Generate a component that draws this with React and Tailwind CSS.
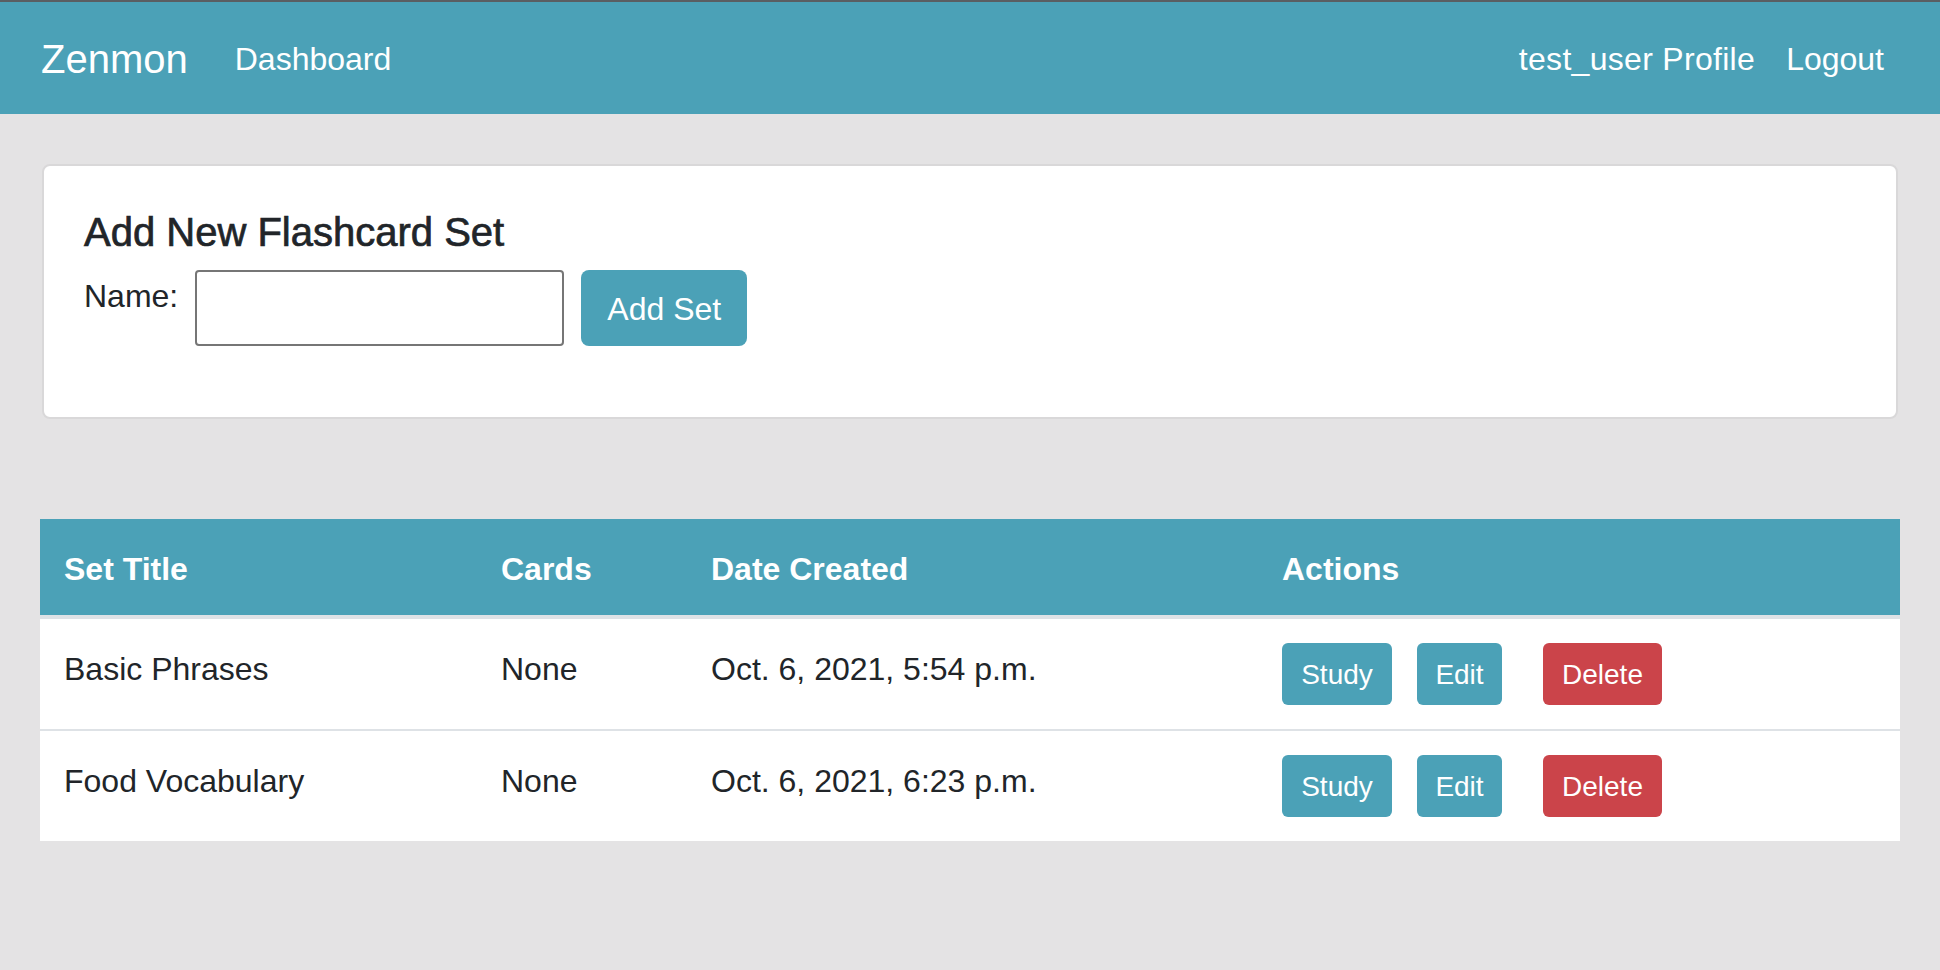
export default function App() {
  const rows = [
    { title: "Basic Phrases", cards: "None", date: "Oct. 6, 2021, 5:54 p.m." },
    { title: "Food Vocabulary", cards: "None", date: "Oct. 6, 2021, 6:23 p.m." },
  ];
  return (
    <div className="min-h-screen bg-[#e4e3e4] font-['Liberation_Sans',Arial,sans-serif] text-[#212529]">
      <div className="h-[2px] bg-[#5a5e62]" />
      <nav className="h-[112px] bg-[#4ba1b7] flex items-center pl-[41px] pr-[56px] text-white">
        <span className="text-[40px] leading-[60px] pt-[2px]">Zenmon</span>
        <a className="ml-[47px] text-[32px] leading-[48px] pt-[2px]">Dashboard</a>
        <div className="ml-auto flex gap-[31px] text-[32px] leading-[48px] pt-[2px]">
          <a className="tracking-[0.3px]">test_user Profile</a>
          <a>Logout</a>
        </div>
      </nav>
      <main className="px-[40px] pt-[50px] pb-[40px]">
        <div className="mx-[2px] border-2 border-[#d9d8d9] rounded-[8px] bg-white px-[40px] pt-[40px] pb-[71px]">
          <h5 className="text-[40px] leading-[48px] font-medium mb-[14px] pt-[2px] [-webkit-text-stroke:0.7px_#212529]">
            Add New Flashcard Set
          </h5>
          <form className="flex items-start" onSubmit={(e) => e.preventDefault()}>
            <label className="text-[32px] leading-[48px] pt-[2px]">Name:</label>
            <input
              type="text"
              className="ml-[17px] w-[369px] h-[76px] border-2 border-[#767676] rounded-[4px] bg-white outline-none px-2 text-[32px]"
            />
            <button
              type="submit"
              className="ml-[17px] h-[76px] w-[166px] bg-[#4ba1b7] text-white text-[32px] rounded-[8px] flex items-center justify-center pt-[2px]"
            >
              Add Set
            </button>
          </form>
        </div>

        <table className="mt-[100px] w-full table-fixed border-collapse">
          <colgroup>
            <col className="w-[437px]" />
            <col className="w-[210px]" />
            <col className="w-[571px]" />
            <col />
          </colgroup>
          <thead>
            <tr className="bg-[#4ba1b7] text-white">
              <th className="text-left font-bold text-[32px] leading-[48px] pt-[26px] pb-[22px] px-[24px]">Set Title</th>
              <th className="text-left font-bold text-[32px] leading-[48px] pt-[26px] pb-[22px] px-[24px]">Cards</th>
              <th className="text-left font-bold text-[32px] leading-[48px] pt-[26px] pb-[22px] px-[24px]">Date Created</th>
              <th className="text-left font-bold text-[32px] leading-[48px] pt-[26px] pb-[22px] px-[24px]">Actions</th>
            </tr>
          </thead>
          <tbody>
            {rows.map((r, i) => (
              <tr
                key={r.title}
                className={
                  "bg-white " +
                  (i === 0 ? "border-t-4 border-[#dee2e6]" : "border-t-2 border-[#dee2e6]")
                }
              >
                <td className="align-top text-[32px] leading-[48px] pt-[26px] pb-[22px] px-[24px]">{r.title}</td>
                <td className="align-top text-[32px] leading-[48px] pt-[26px] pb-[22px] px-[24px]">{r.cards}</td>
                <td className="align-top text-[32px] leading-[48px] pt-[26px] pb-[22px] px-[24px]">{r.date}</td>
                <td className="align-top p-[24px]">
                  <div className="flex">
                    <button className="h-[62px] w-[110px] bg-[#4ba1b7] text-white text-[28px] rounded-[6px] flex items-center justify-center pt-[2px]">
                      Study
                    </button>
                    <button className="ml-[25px] h-[62px] w-[85px] bg-[#4ba1b7] text-white text-[28px] rounded-[6px] flex items-center justify-center pt-[2px]">
                      Edit
                    </button>
                    <button className="ml-[41px] h-[62px] w-[119px] bg-[#cb444a] text-white text-[28px] rounded-[6px] flex items-center justify-center pt-[2px]">
                      Delete
                    </button>
                  </div>
                </td>
              </tr>
            ))}
          </tbody>
        </table>
      </main>
    </div>
  );
}
